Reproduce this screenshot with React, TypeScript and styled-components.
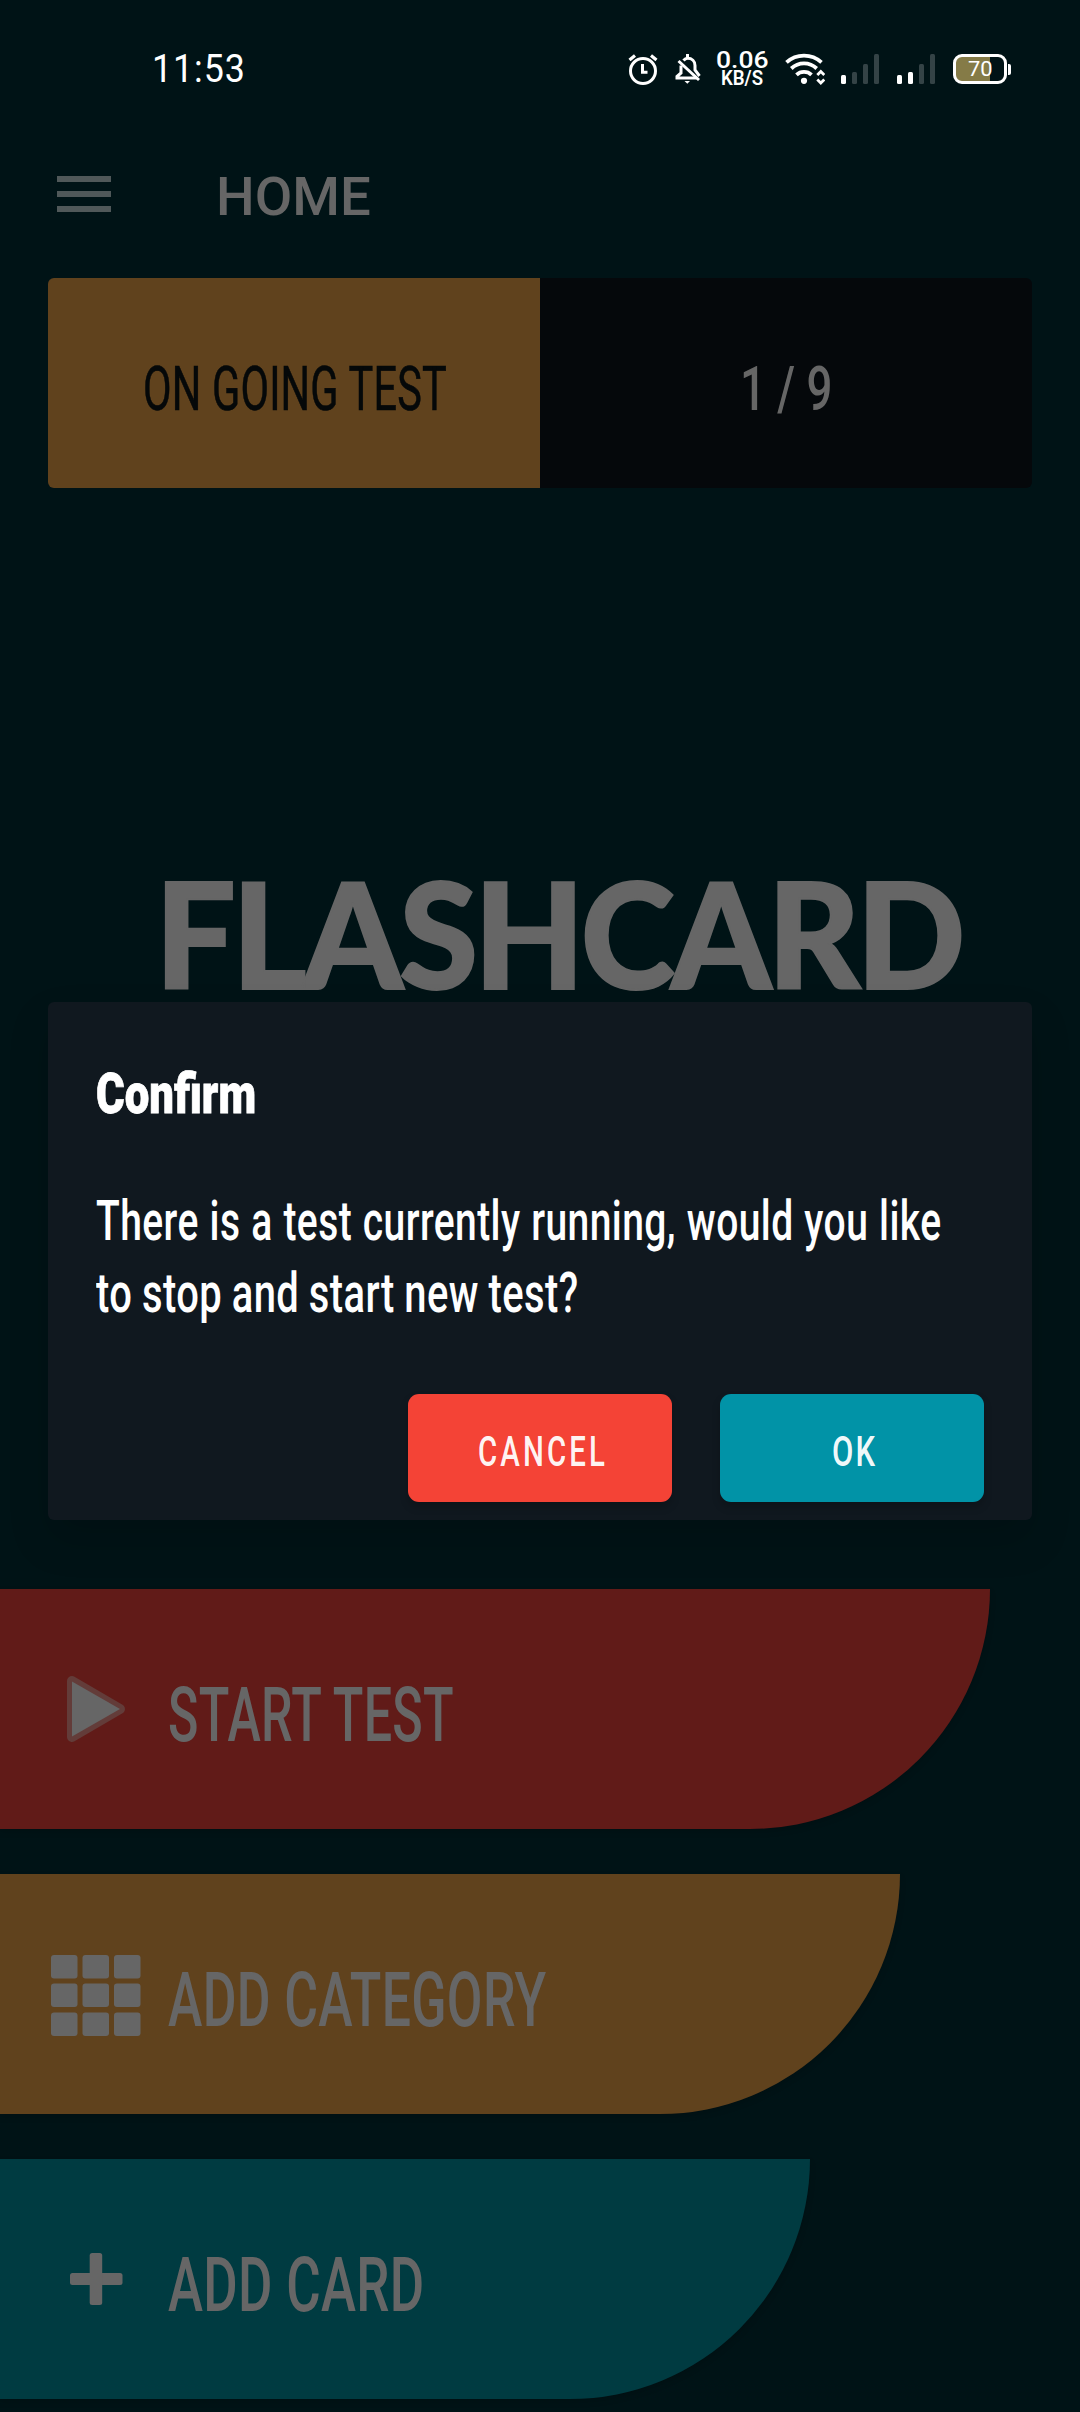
import React, { useLayoutEffect, useRef, useState } from "react";
import styled, { createGlobalStyle } from "styled-components";

const GlobalStyle = createGlobalStyle`
  *, *::before, *::after { box-sizing: border-box; }
  html, body { margin: 0; padding: 0; background: #001316; }
  body { font-family: Roboto, "Liberation Sans", sans-serif; }
`;

const Screen = styled.div`
  position: relative;
  width: 1080px;
  height: 2412px;
  overflow: hidden;
  display: flex;
  flex-direction: column;
  background: #001316;
`;

/* Text squeezed or widened to an exact width */

const FitBox = styled.span<{ $width: number }>`
  display: block;
  flex: none;
  width: ${(p) => p.$width}px;
  white-space: nowrap;
`;

const FitInner = styled.span<{ $size: number; $weight: number; $line: number; $spacing: number; $words: number; $family: string; $stroke: number }>`
  display: inline-block;
  vertical-align: top;
  transform-origin: 0 50%;
  font-family: ${(p) => p.$family};
  font-size: ${(p) => p.$size}px;
  font-weight: ${(p) => p.$weight};
  line-height: ${(p) => p.$line}px;
  letter-spacing: ${(p) => p.$spacing}px;
  word-spacing: ${(p) => p.$words}px;
  -webkit-text-stroke: ${(p) => p.$stroke}px currentColor;
`;

interface FitTextProps {
  width: number;
  size: number;
  weight?: number;
  line?: number;
  spacing?: number;
  words?: number;
  stroke?: number;
  family?: string;
  children: React.ReactNode;
}

function FitText({
  width,
  size,
  weight = 400,
  line = 72,
  spacing = 0,
  words = 0,
  stroke = 0,
  family = 'Roboto, "Liberation Sans", sans-serif',
  children,
}: FitTextProps) {
  const ref = useRef<HTMLSpanElement>(null);
  const [scale, setScale] = useState(1);
  useLayoutEffect(() => {
    if (ref.current) setScale(width / (ref.current.offsetWidth - spacing));
  }, [width, spacing]);
  return (
    <FitBox $width={width}>
      <FitInner
        ref={ref}
        $size={size}
        $weight={weight}
        $line={line}
        $spacing={spacing}
        $words={words}
        $family={family}
        $stroke={stroke}
        style={{ transform: `scaleX(${scale})` }}
      >
        {children}
      </FitInner>
    </FitBox>
  );
}

/* Status bar */

const StatusBar = styled.header`
  flex: none;
  height: 128px;
  padding: 10px 69px 0 152px;
  display: flex;
  align-items: center;
  justify-content: space-between;
  color: #fff;
`;

const StatusIcons = styled.div`
  display: flex;
  align-items: center;
`;

const Glyph = styled.svg<{ $gap?: number }>`
  display: block;
  flex: none;
  margin-right: ${(p) => p.$gap ?? 0}px;
`;

const NetSpeed = styled.div`
  width: 52px;
  margin-right: 17px;
  padding-top: 1px;
  display: flex;
  flex-direction: column;
  align-items: center;
`;

const Bars = styled.div<{ $gap: number }>`
  display: flex;
  align-items: flex-end;
  gap: 6px;
  margin-right: ${(p) => p.$gap}px;
`;

const Bar = styled.i<{ $h: number; $on: boolean }>`
  width: 5px;
  height: ${(p) => p.$h}px;
  border-radius: 1.5px;
  background: ${(p) => (p.$on ? "#fff" : "#344346")};
`;

const Battery = styled.div`
  width: 54px;
  height: 30px;
  border: 3px solid #fff;
  border-radius: 9px;
  background: linear-gradient(to right, #857b47 34px, transparent 34px);
  display: flex;
  align-items: center;
  justify-content: center;
  padding-left: 1px;
`;

const BatteryTip = styled.i`
  width: 3px;
  height: 11px;
  margin-left: 1px;
  border-radius: 0 2px 2px 0;
  background: #fff;
`;

const SIGNAL_HEIGHTS = [9, 12, 20, 30];

function Signal({ level, gap }: { level: number; gap: number }) {
  return (
    <Bars $gap={gap}>
      {SIGNAL_HEIGHTS.map((h, i) => (
        <Bar key={h} $h={h} $on={i < level} />
      ))}
    </Bars>
  );
}

/* App bar and progress banner */

const AppBar = styled.nav`
  flex: none;
  height: 150px;
  padding: 48px 57px 0;
  display: flex;
  align-items: flex-start;
`;

const MenuButton = styled.div`
  width: 54px;
  height: 36px;
  margin-right: 105px;
  display: flex;
  flex-direction: column;
  justify-content: space-between;
`;

const MenuLine = styled.i`
  height: 6px;
  background: #505859;
`;

const Title = styled.h1`
  margin: -16px 0 0;
  font-weight: 500;
  color: #666;
`;

const Banner = styled.section`
  flex: none;
  height: 210px;
  margin: 0 48px;
  display: grid;
  grid-template-columns: 1fr 1fr;
  border-radius: 6px;
  overflow: hidden;
`;

const BannerCell = styled.div<{ $bg: string; $fg: string; $shift: number }>`
  display: flex;
  align-items: center;
  justify-content: center;
  padding: 11px 0 0 ${(p) => p.$shift}px;
  background: ${(p) => p.$bg};
  color: ${(p) => p.$fg};
`;

const Hero = styled.div`
  flex: none;
  height: 1101px;
  padding: 371px 0 0 155px;
  color: #666;
`;

/* Menu slabs */

const Menu = styled.div`
  display: flex;
  flex-direction: column;
  gap: 45px;
`;

const Slab = styled.div<{ $width: number; $bg: string }>`
  flex: none;
  width: ${(p) => p.$width}px;
  height: 240px;
  padding-left: 48px;
  display: flex;
  align-items: center;
  gap: 24px;
  border-bottom-right-radius: 240px;
  background: ${(p) => p.$bg};
  color: #666;
  box-shadow: 0 3px 6px rgba(0, 0, 0, 0.15);
`;

const SlabLabel = styled.div`
  padding-top: 12px;
`;

/* Dialog */

const Overlay = styled.div`
  position: absolute;
  inset: 0;
  padding: 1002px 48px 0;
`;

const Dialog = styled.div`
  height: 518px;
  padding: 57px 48px 18px;
  display: flex;
  flex-direction: column;
  border-radius: 6px;
  background: #10181f;
  color: #fff;
  box-shadow: 0 20px 40px rgba(0, 0, 0, 0.15);
`;

const Message = styled.div`
  margin-top: 54px;
`;

const Actions = styled.div`
  margin-top: 65px;
  display: flex;
  justify-content: flex-end;
  gap: 48px;
`;

const Button = styled.button<{ $bg: string }>`
  width: 264px;
  height: 108px;
  border: 0;
  padding: 8px 0 0 2px;
  border-radius: 11px;
  display: flex;
  align-items: center;
  justify-content: center;
  background: ${(p) => p.$bg};
  color: rgba(255, 255, 255, 0.95);
  box-shadow: 0 5px 8px rgba(0, 0, 0, 0.2);
`;

const GRID_COLS = [3, 34.5, 66];
const GRID_ROWS = [1, 29.5, 58.5];

export default function App() {
  return (
    <Screen>
      <GlobalStyle />
      <StatusBar>
        <FitText width={93} size={38.5} line={44} spacing={1}>
          11:53
        </FitText>
        <StatusIcons>
          <Glyph $gap={16} width="32" height="32" viewBox="628 53 32 32" fill="none" stroke="#fff" strokeWidth="3">
            <circle cx="644" cy="71" r="12.5" />
            <path d="M630.5 60l5.500-4.500M657.500 60l-5.500-4.500" strokeWidth="3.200" />
            <path d="M643.500 64v8.300h5" />
          </Glyph>
          <Glyph $gap={15} width="26" height="32" viewBox="676 53 26 32" fill="none" stroke="#fff" strokeWidth="3">
            <path d="M679.500 61l20.500 19" />
            <path d="M682 65.500v7.500l-4 3.500v1.500h19.500M684.500 60.500c1.200-1.500 2.500-2.300 4-2.300c4.500 0 7.500 3 7.500 7.300v4.500l4.500 6" />
            <path d="M688.500 54v4" />
            <path d="M685.500 81h5.500l-2.700 2.800z" fill="#fff" stroke="none" />
          </Glyph>
          <NetSpeed>
            <FitText width={53} size={24.5} weight={500} line={19}>
              0.06
            </FitText>
            <FitText width={42} size={19.5} weight={600} line={20}>
              KB/S
            </FitText>
          </NetSpeed>
          <Glyph $gap={16} width="40" height="32" viewBox="785 53 40 32" fill="none" stroke="#fff" strokeWidth="3.800">
            <path d="M786.500 62.300a26 26 0 0 1 35 0" />
            <path d="M791.300 68.500a18.500 18.500 0 0 1 25.400 0" />
            <path d="M796.500 74.800a11 11 0 0 1 15 0" />
            <circle cx="804" cy="80.800" r="3.100" fill="#fff" stroke="none" />
            <path d="M817.300 75l3.500-3.500l3.500 3.500M817.300 79.500l3.500 3.500l3.500-3.500" strokeWidth="2.800" />
          </Glyph>
          <Signal level={1} gap={18} />
          <Signal level={2} gap={18} />
          <Battery>
            <FitText width={25} size={21} line={22} weight={400}>
              70
            </FitText>
          </Battery>
          <BatteryTip />
        </StatusIcons>
      </StatusBar>

      <AppBar>
        <MenuButton>
          <MenuLine />
          <MenuLine />
          <MenuLine />
        </MenuButton>
        <Title>
          <FitText width={155} size={54.5} weight={500}>
            HOME
          </FitText>
        </Title>
      </AppBar>

      <Banner>
        <BannerCell $bg="#60421d" $fg="#050809" $shift={1}>
          <FitText width={304} size={62} weight={400} stroke={0.6} spacing={0.3}>
            ON GOING TEST
          </FitText>
        </BannerCell>
        <BannerCell $bg="#05080b" $fg="#666666" $shift={0}>
          <FitText width={92} size={62} weight={500}>
            1 / 9
          </FitText>
        </BannerCell>
      </Banner>

      <Hero>
        <FitText width={810} size={146} weight={900} line={147} spacing={-4} stroke={2} family='Lato, "Open Sans", sans-serif'>
          FLASHCARD
        </FitText>
      </Hero>

      <Menu>
        <Slab $width={990} $bg="#611b18">
          <Glyph width="96" height="96" viewBox="0 0 96 96">
            <path d="M24 20L72 48L24 76Z" fill="#633c39" stroke="#633c39" strokeWidth="10" strokeLinejoin="round" />
            <path d="M24 20.500L72 48L24 75.500Z" fill="#666" />
          </Glyph>
          <SlabLabel>
            <FitText width={286} size={76.5} weight={500} spacing={0.5}>
              START TEST
            </FitText>
          </SlabLabel>
        </Slab>
        <Slab $width={900} $bg="#60421d">
          <Glyph width="96" height="84" viewBox="0 0 96 84" fill="#666">
            {GRID_ROWS.map((y) =>
              GRID_COLS.map((x) => <rect key={`${x}-${y}`} x={x} y={y + 2} width="26.500" height="23.500" rx="3" />),
            )}
          </Glyph>
          <SlabLabel>
            <FitText width={378} size={76.5} weight={500} spacing={0.5}>
              ADD CATEGORY
            </FitText>
          </SlabLabel>
        </Slab>
        <Slab $width={810} $bg="#003b41">
          <Glyph width="96" height="96" viewBox="0 0 96 96" fill="#666">
            <rect x="22" y="42" width="52.500" height="12" rx="2.500" />
            <rect x="41.700" y="22" width="12.500" height="52" rx="2.500" />
          </Glyph>
          <SlabLabel>
            <FitText width={256} size={76.5} weight={500} spacing={0.5}>
              ADD CARD
            </FitText>
          </SlabLabel>
        </Slab>
      </Menu>

      <Overlay>
        <Dialog>
          <FitText width={160} size={55.5} weight={900} stroke={0.8}>
            Confirm
          </FitText>
          <Message>
            <FitText width={845} size={56} weight={500} spacing={0.6} words={1}>
              There is a test currently running, would you like
            </FitText>
            <FitText width={482} size={56} weight={500} spacing={0.6} words={-1}>
              to stop and start new test?
            </FitText>
          </Message>
          <Actions>
            <Button $bg="#f44336">
              <FitText width={127} size={42.5} line={48} weight={500} spacing={4.5}>
                CANCEL
              </FitText>
            </Button>
            <Button $bg="#0193a7">
              <FitText width={43} size={42.5} line={48} weight={500} spacing={3}>
                OK
              </FitText>
            </Button>
          </Actions>
        </Dialog>
      </Overlay>
    </Screen>
  );
}
